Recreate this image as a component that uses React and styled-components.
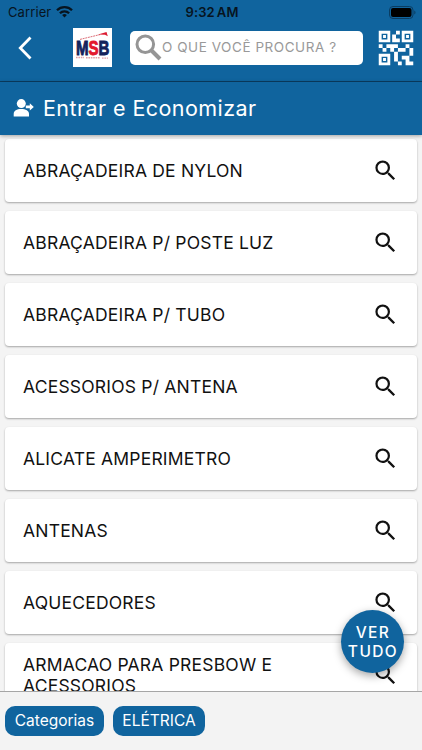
import React from 'react';
import styled, { createGlobalStyle } from 'styled-components';
import { MdSearch, MdQrCode2 } from 'react-icons/md';

const GlobalStyle = createGlobalStyle`
  * {
    box-sizing: border-box;
  }
  body {
    margin: 0;
    font-family: Inter, 'Liberation Sans', sans-serif;
    background: #f4f4f4;
  }
`;

const Screen = styled.div`
  position: relative;
  display: flex;
  flex-direction: column;
  width: 422px;
  height: 750px;
  overflow: hidden;
  background: #f4f4f4;
`;

const Header = styled.header`
  flex: none;
  height: 82px;
  background: #10649e;
  border-bottom: 1px solid #0a3d62;
`;

const StatusBar = styled.div`
  display: grid;
  grid-template-columns: 1fr auto 1fr;
  align-items: center;
  height: 24px;
  padding: 0 6px 0 8px;
  font-size: 13px;
  color: #07141f;
`;

const Carrier = styled.span`
  display: flex;
  align-items: center;
  gap: 5px;
  letter-spacing: 0.1px;
`;

const Clock = styled.span`
  font-weight: 600;
  letter-spacing: 0.15px;
  word-spacing: -1.5px;
`;

const BatteryIcon = styled.svg`
  justify-self: end;
`;

const Toolbar = styled.div`
  display: flex;
  align-items: center;
  height: 47px;
  padding: 0 9px 0 18px;
`;

const BackIcon = styled.svg`
  margin-right: 41px;
`;

const Logo = styled.svg`
  margin-right: 18px;
  background: #fff;
`;

const SearchBox = styled.label`
  display: flex;
  align-items: center;
  width: 233px;
  height: 34px;
  padding-left: 5px;
  margin-right: 16px;
  border-radius: 5px;
  background: #fff;
`;

const SearchInput = styled.input`
  flex: 1;
  min-width: 0;
  padding: 0 0 1px;
  border: 0;
  outline: 0;
  background: transparent;
  font-family: inherit;
  font-size: 13.5px;
  letter-spacing: 0.55px;

  &::placeholder {
    color: #999;
    opacity: 1;
  }
`;

const QrIcon = styled(MdQrCode2)`
  flex: none;
  margin: -6px;
  color: #fff;
`;

const LoginBar = styled.div`
  position: relative;
  z-index: 1;
  flex: none;
  display: flex;
  align-items: center;
  gap: 9px;
  height: 53px;
  padding: 0 0 2px 13px;
  background: #10649e;
  box-shadow: 0 1px 4px rgba(0, 0, 0, 0.35);
  color: #fff;
  font-size: 21.5px;
  letter-spacing: 0.43px;
`;

const List = styled.ul`
  flex: 1;
  min-height: 0;
  display: flex;
  flex-direction: column;
  gap: 9px;
  margin: 0;
  padding: 4px 5px 0;
  overflow: hidden;
  list-style: none;
`;

const Card = styled.li`
  flex: none;
  display: flex;
  align-items: center;
  justify-content: space-between;
  height: 63px;
  padding: 0 18px;
  border-radius: 4px;
  background: #fff;
  box-shadow: 0 1px 2px rgba(0, 0, 0, 0.32);
  color: #111;
`;

const CardName = styled.span`
  max-width: 290px;
  font-size: 17.5px;
  line-height: 21px;
  letter-spacing: 0.2px;
`;

const SeeAll = styled.button`
  position: absolute;
  left: 341px;
  top: 610px;
  z-index: 2;
  width: 63px;
  height: 63px;
  padding: 0 0 0 1px;
  border: 0;
  border-radius: 50%;
  background: #10649e;
  box-shadow: 0 3px 8px rgba(0, 0, 0, 0.35);
  color: #fff;
  font-family: inherit;
  font-size: 15.5px;
  font-weight: 500;
  line-height: 19px;
  letter-spacing: 1.4px;
`;

const Footer = styled.footer`
  flex: none;
  display: flex;
  gap: 9px;
  height: 59px;
  padding: 14px 5px 0;
  border-top: 1px solid #a6a6a6;
  background: #f3f3f3;
`;

const Chip = styled.span`
  display: flex;
  align-items: center;
  justify-content: center;
  width: ${props => props.$width}px;
  height: 30px;
  padding-bottom: 1px;
  border-radius: 10px;
  background: #10649e;
  color: #fff;
  font-size: 15.5px;
`;

const categories = [
  'ABRAÇADEIRA DE NYLON',
  'ABRAÇADEIRA P/ POSTE LUZ',
  'ABRAÇADEIRA P/ TUBO',
  'ACESSORIOS P/ ANTENA',
  'ALICATE AMPERIMETRO',
  'ANTENAS',
  'AQUECEDORES',
  'ARMACAO PARA PRESBOW E ACESSORIOS',
];

const WifiIcon = () => (
  <svg width="17" height="12" viewBox="0 0 17 12" fill="none" stroke="#07141f" strokeWidth="2.3">
    <path d="M1 4.3a10.6 10.6 0 0 1 15 0" />
    <path d="M3.9 7.3a6.5 6.5 0 0 1 9.2 0" />
    <path d="M6.1 9.1a3.4 3.4 0 0 1 4.8 0L8.5 11.6z" fill="#07141f" stroke="none" />
  </svg>
);

const Battery = () => (
  <BatteryIcon width="27" height="13" viewBox="0 0 27 13">
    <rect x="0.5" y="0.5" width="23.5" height="12" rx="3.5" fill="none" stroke="#0a3d62" />
    <rect x="2" y="2" width="20.5" height="9" rx="2" fill="#000" />
    <path d="M25.3 4.5v4c1.6-.6 1.6-3.4 0-4z" fill="#0a3d62" />
  </BatteryIcon>
);

const MsbLogo = () => (
  <Logo width="39" height="39" viewBox="0 0 39 39">
    <path d="M7 11.4 27 6.6" stroke="#d9606a" strokeWidth="0.9" strokeDasharray="2 .7" />
    <path d="m25 6.6 8.5-2.6 1.3 4.3-2.8-1.5z" fill="#dc1c31" />
    <text
      x="3"
      y="26.7"
      textLength="33.5"
      lengthAdjust="spacingAndGlyphs"
      fontFamily="'Liberation Sans', sans-serif"
      fontWeight="700"
      fontSize="20"
      strokeWidth="0.9"
      fill="#14235c"
      stroke="#14235c"
    >
      M<tspan fill="#e3182d" stroke="#e3182d">S</tspan>B
    </text>
    <path d="M3 29.5h8M13 29.8h14M29 30.1h6" stroke="#e0a0a6" strokeWidth="1.4" strokeDasharray="1.6 .8" />
  </Logo>
);

const PersonIcon = () => (
  <svg width="21" height="20" viewBox="0 0 21 20" fill="#fff">
    <circle cx="8.3" cy="5.6" r="4.5" />
    <path d="M.7 18.5v-2.6c0-3.2 3-4.9 7.5-4.9s7.8 1.7 7.8 4.9v2.6z" />
    <path d="M12.8 7.6h4V5.2l4 3.7-4 3.7v-2.4h-4z" />
  </svg>
);

export default function App() {
  return (
    <>
      <GlobalStyle />
      <Screen>
        <Header>
          <StatusBar>
            <Carrier>
              Carrier
              <WifiIcon />
            </Carrier>
            <Clock>9:32 AM</Clock>
            <Battery />
          </StatusBar>
          <Toolbar>
            <BackIcon width="14" height="24" viewBox="0 0 14 24" fill="none" stroke="#fff" strokeWidth="2.8">
              <path d="M12.5 1.5 2.3 12l10.2 10.5" />
            </BackIcon>
            <MsbLogo />
            <SearchBox>
              <svg width="27" height="27" viewBox="0 0 27 27" fill="none" stroke="#959595">
                <circle cx="10.3" cy="10.3" r="8.3" strokeWidth="3" />
                <path d="m16 16 9 9" strokeWidth="4" />
              </svg>
              <SearchInput placeholder="O QUE VOCÊ PROCURA ?" />
            </SearchBox>
            <QrIcon size={46} />
          </Toolbar>
        </Header>
        <LoginBar>
          <PersonIcon />
          Entrar e Economizar
        </LoginBar>
        <List>
          {categories.map(name => (
            <Card key={name}>
              <CardName>{name}</CardName>
              <MdSearch size={27} />
            </Card>
          ))}
        </List>
        <SeeAll>
          VER
          <br />
          TUDO
        </SeeAll>
        <Footer>
          <Chip $width={99}>Categorias</Chip>
          <Chip $width={92}>ELÉTRICA</Chip>
        </Footer>
      </Screen>
    </>
  );
}
